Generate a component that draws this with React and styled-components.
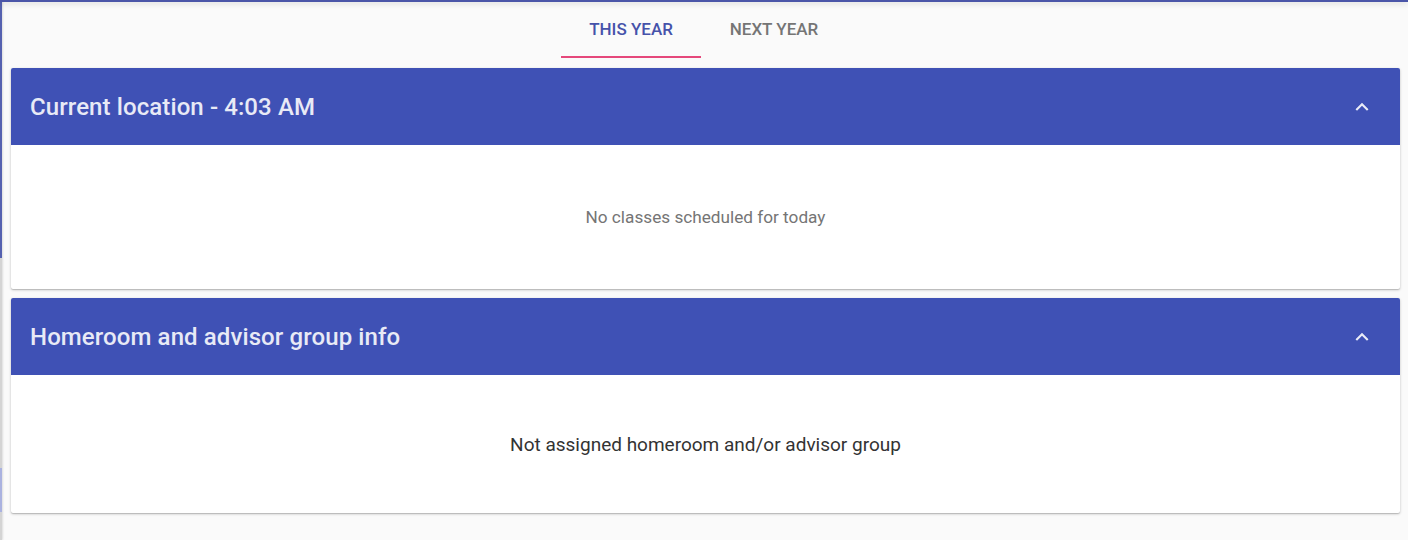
import React from "react";
import styled, { createGlobalStyle } from "styled-components";

const Global = createGlobalStyle`
  html, body { margin: 0; padding: 0; background: #fafafa; }
  body { font-family: Roboto, "Noto Sans", "Liberation Sans", sans-serif; }
`;

const Page = styled.div`
  display: flex;
  width: 1408px;
  height: 540px;
  overflow: hidden;
  background: #fafafa;
  position: relative;
`;

const TopBar = styled.div`
  position: absolute;
  left: 0;
  top: 0;
  right: 0;
  height: 2px;
  background: #4a55a8;
  box-shadow: 0 1px 6px rgba(0, 0, 0, 0.25);
`;

const SideEdge = styled.div`
  width: 2px;
  flex: none;
  background: linear-gradient(
    to bottom,
    #5561b0 0px,
    #5561b0 258px,
    #d4d4d4 258px,
    #d4d4d4 468px,
    #aab2e0 468px,
    #aab2e0 512px,
    #d4d4d4 512px
  );
  box-shadow: 1px 0 2px rgba(0, 0, 0, 0.12);
`;

const Main = styled.div`
  flex: 1;
  padding: 10px 8px 0 9px;
  display: flex;
  flex-direction: column;
`;

const Tabs = styled.div`
  display: flex;
  justify-content: center;
  gap: 3px;
  margin-bottom: 10px;
  padding-right: 6px;
`;

const Tab = styled.div`
  width: 140px;
  height: 48px;
  box-sizing: border-box;
  display: flex;
  align-items: center;
  justify-content: center;
  font-size: 17px;
  font-weight: 500;
  text-transform: uppercase;
  color: ${(p) => (p.$active ? "#4552aa" : "#757575")};
  border-bottom: 2px solid ${(p) => (p.$active ? "#e5487b" : "transparent")};
  padding-bottom: 9px;
`;

const Card = styled.section`
  background: #fff;
  border-radius: 2px;
  box-shadow: 0 1px 3px rgba(0, 0, 0, 0.2), 0 1px 1px rgba(0, 0, 0, 0.14);
  margin-bottom: 9px;
  overflow: hidden;
`;

const Header = styled.div`
  height: 77px;
  background: #3f51b5;
  display: flex;
  align-items: center;
  justify-content: space-between;
  padding: 0 25px 0 19px;
`;

const Title = styled.h2`
  margin: 0;
  font-size: 24px;
  font-weight: 500;
  color: #e8eaf6;
  letter-spacing: 0.1px;
`;

const Chevron = styled.svg`
  width: 26px;
  height: 26px;
  color: #e8eaf6;
`;

const Body = styled.div`
  height: ${(p) => p.$h}px;
  display: flex;
  align-items: center;
  justify-content: center;
  font-size: ${(p) => p.$size}px;
  color: ${(p) => p.$color};
`;

const ChevronUp = () => (
  <Chevron viewBox="0 0 24 24" fill="currentColor">
    <path d="M7.41 15.41 12 10.83l4.59 4.58L18 14l-6-6-6 6z" />
  </Chevron>
);

export default function App() {
  return (
    <>
      <Global />
      <Page>
        <TopBar />
        <SideEdge />
        <Main>
          <Tabs>
            <Tab $active>This Year</Tab>
            <Tab>Next Year</Tab>
          </Tabs>
          <Card>
            <Header>
              <Title>Current location - 4:03 AM</Title>
              <ChevronUp />
            </Header>
            <Body $h={144} $size={17.2} $color="#757575">
              No classes scheduled for today
            </Body>
          </Card>
          <Card>
            <Header>
              <Title>Homeroom and advisor group info</Title>
              <ChevronUp />
            </Header>
            <Body $h={138} $size={19} $color="#333">
              Not assigned homeroom and/or advisor group
            </Body>
          </Card>
        </Main>
      </Page>
    </>
  );
}
